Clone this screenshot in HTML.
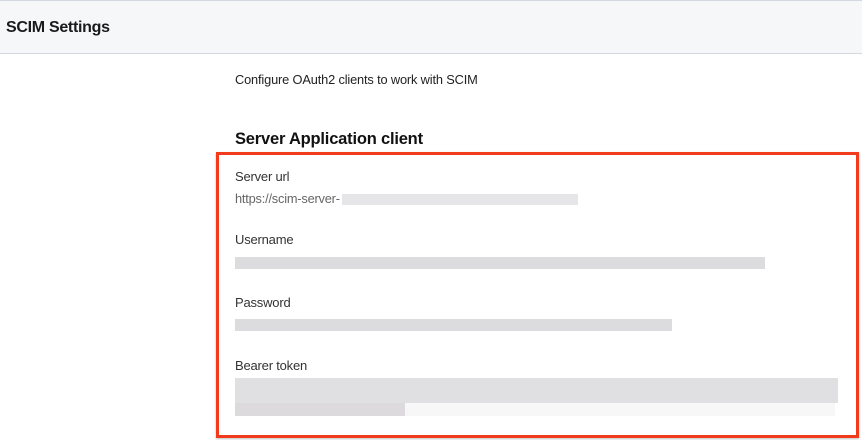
<!DOCTYPE html>
<html><head><style>
body{margin:0;width:862px;height:440px;overflow:hidden;background:#fff;font-family:"Liberation Sans",sans-serif;position:relative}
.hdr{position:absolute;left:0;top:0;width:862px;height:52px;background:#f6f7f9;border-top:1px solid #d3d9e0;border-bottom:1px solid #d3d9e0}
.hdr span{position:absolute;left:6px;top:18px;font-size:16px;font-weight:bold;color:#1a1a1a;letter-spacing:-0.3px}
.t{position:absolute;color:#222;white-space:nowrap}
.lbl{font-size:13px;color:#333;letter-spacing:-0.2px}
.box{position:absolute;left:216px;top:152px;width:637px;height:280px;border:3px solid #f23a1c;box-shadow:0 1px 2px rgba(0,0,0,.25)}
.b{position:absolute;background:#dcdcdf}
</style></head><body>
<div class="hdr"><span>SCIM Settings</span></div>
<div class="t" style="left:235px;top:72px;font-size:12.8px;letter-spacing:-0.15px">Configure OAuth2 clients to work with SCIM</div>
<div class="t" style="left:235px;top:130px;font-size:16.5px;font-weight:bold;color:#111;letter-spacing:-0.2px">Server Application client</div>
<div class="box"></div>
<div class="t lbl" style="left:235px;top:169px">Server url</div>
<div class="t" style="left:235px;top:191px;font-size:12.8px;color:#666;letter-spacing:-0.2px">https://scim-server-</div>
<div class="b" style="left:342px;top:194px;width:236px;height:11px;background:#e6e6e8"></div>
<div class="t lbl" style="left:235px;top:232px">Username</div>
<div class="b" style="left:235px;top:257px;width:530px;height:12px"></div>
<div class="t lbl" style="left:235px;top:295px">Password</div>
<div class="b" style="left:235px;top:319px;width:437px;height:12px"></div>
<div class="t lbl" style="left:235px;top:358px">Bearer token</div>
<div class="b" style="left:235px;top:378px;width:603px;height:25px;background:#e0e0e3"></div>
<div class="b" style="left:235px;top:403px;width:170px;height:13px;background:#dcdadc"></div>
<div class="b" style="left:405px;top:403px;width:430px;height:13px;background:#f7f7f8"></div>
</body></html>
